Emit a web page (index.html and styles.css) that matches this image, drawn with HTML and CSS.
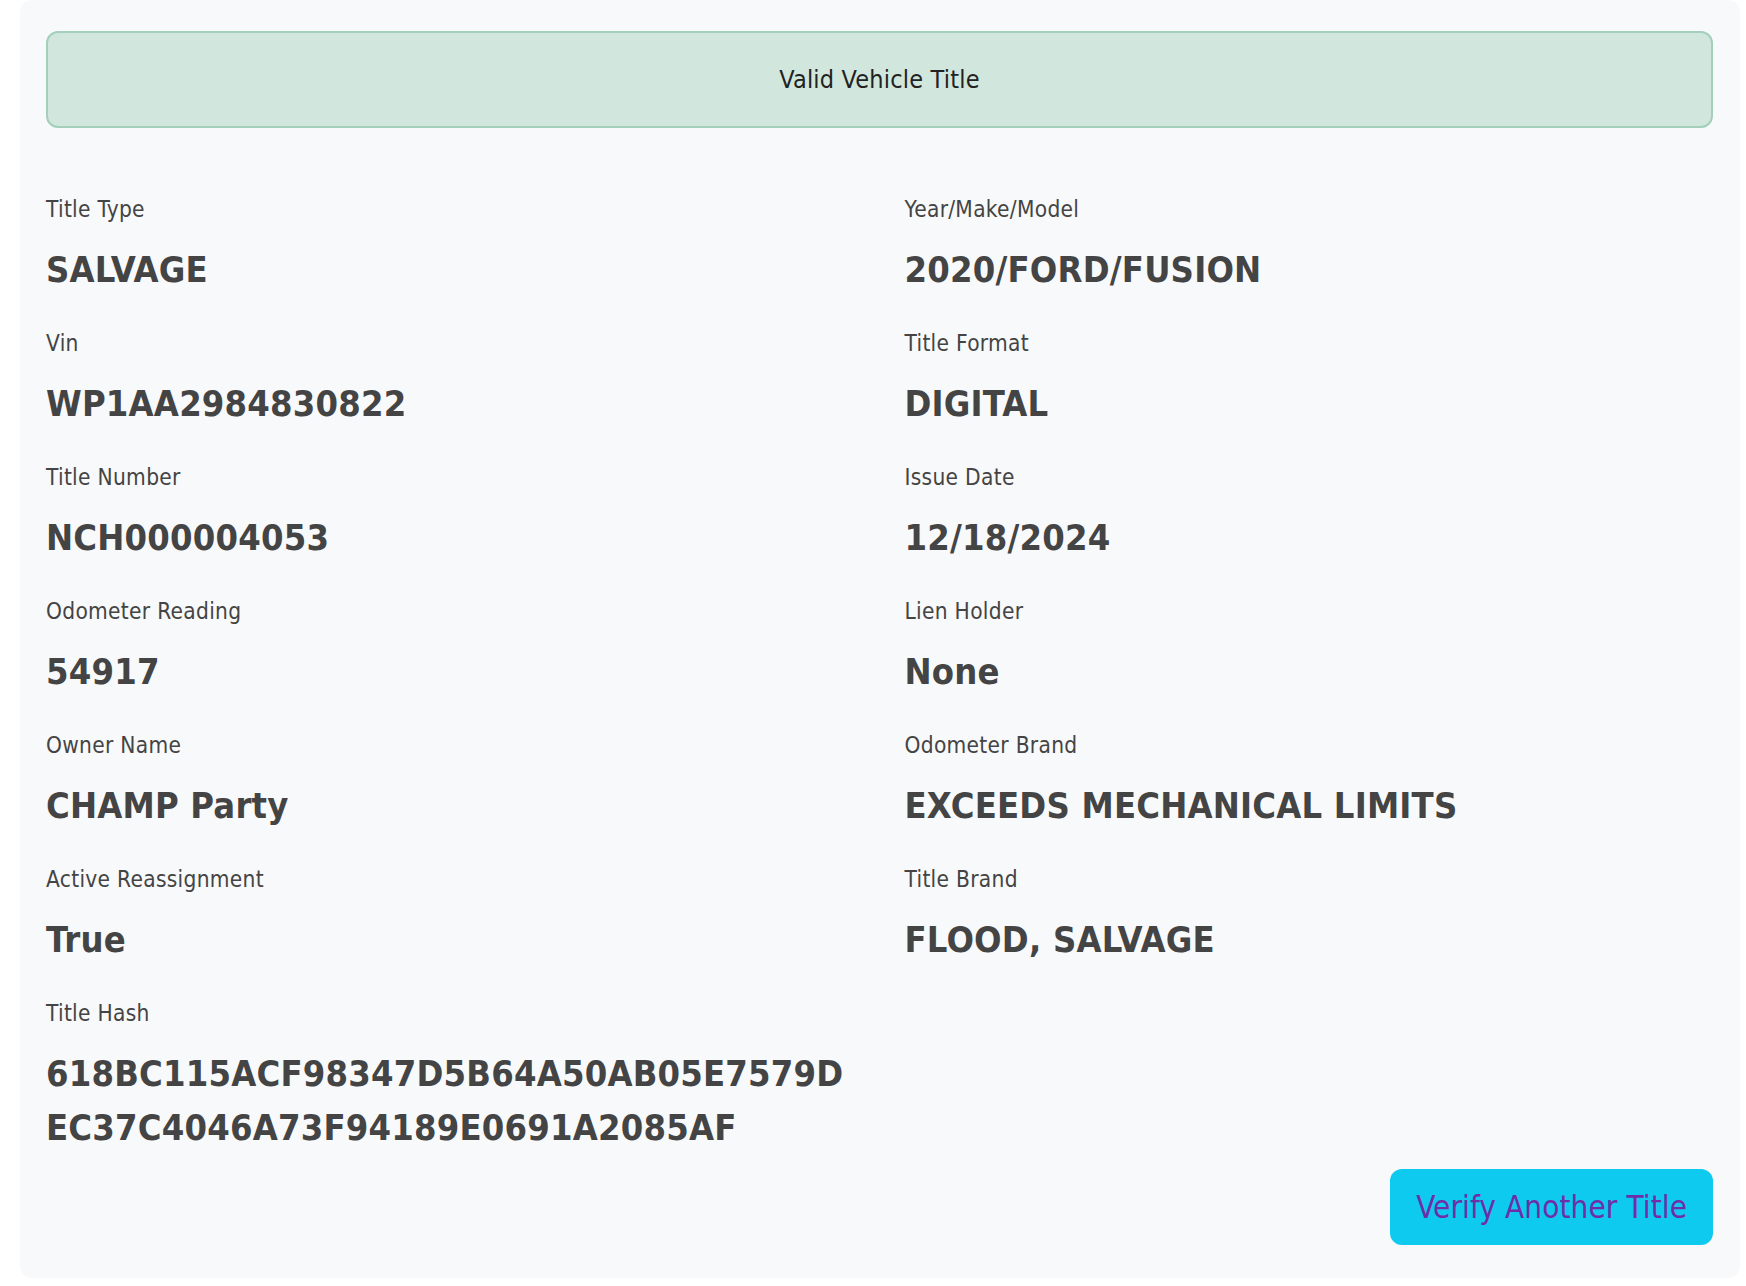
FILE: index.html
```html
<!DOCTYPE html>
<html lang="en">
<head>
    <meta charset="UTF-8">
    <meta name="viewport" content="width=device-width, initial-scale=1.0">
    <title>Title Verification Result</title>
    <link rel="stylesheet" href="styles.css">
</head>
<body>
    <div class="page">
        <div class="result-card">
            <div class="alert-valid">Valid Vehicle Title</div>

            <div class="details">
                <div class="field">
                    <div class="field-label">Title Type</div>
                    <div class="field-value">SALVAGE</div>
                </div>
                <div class="field">
                    <div class="field-label">Year/Make/Model</div>
                    <div class="field-value">2020/FORD/FUSION</div>
                </div>

                <div class="field">
                    <div class="field-label">Vin</div>
                    <div class="field-value">WP1AA2984830822</div>
                </div>
                <div class="field">
                    <div class="field-label">Title Format</div>
                    <div class="field-value">DIGITAL</div>
                </div>

                <div class="field">
                    <div class="field-label">Title Number</div>
                    <div class="field-value">NCH000004053</div>
                </div>
                <div class="field">
                    <div class="field-label">Issue Date</div>
                    <div class="field-value">12/18/2024</div>
                </div>

                <div class="field">
                    <div class="field-label">Odometer Reading</div>
                    <div class="field-value">54917</div>
                </div>
                <div class="field">
                    <div class="field-label">Lien Holder</div>
                    <div class="field-value">None</div>
                </div>

                <div class="field">
                    <div class="field-label">Owner Name</div>
                    <div class="field-value">CHAMP Party</div>
                </div>
                <div class="field">
                    <div class="field-label">Odometer Brand</div>
                    <div class="field-value">EXCEEDS MECHANICAL LIMITS</div>
                </div>

                <div class="field">
                    <div class="field-label">Active Reassignment</div>
                    <div class="field-value">True</div>
                </div>
                <div class="field">
                    <div class="field-label">Title Brand</div>
                    <div class="field-value">FLOOD, SALVAGE</div>
                </div>

                <div class="field">
                    <div class="field-label">Title Hash</div>
                    <div class="field-value hash">618BC115ACF98347D5B64A50AB05E7579DEC37C4046A73F94189E0691A2085AF</div>
                </div>
            </div>

            <div class="actions">
                <button class="btn-verify">Verify Another Title</button>
            </div>
        </div>
    </div>
</body>
</html>
```

FILE: styles.css
```css
body {
    margin: 0;
    background: #fff;
    font-family: 'DejaVu Sans Condensed', 'DejaVu Sans', sans-serif;
    color: #444;
}

.page {
    padding: 0 6px 10px 20px;
}

.result-card {
    background: #f8f9fa;
    border-radius: 12px;
    padding: 31px 27px 33px 26px;
}

.alert-valid {
    background: #d1e7dd;
    border: 2px solid #a3cfbb;
    border-radius: 12px;
    color: #222;
    font-size: 25px;
    letter-spacing: 0.2px;
    line-height: 37px;
    text-align: center;
    padding: 28px 20px;
}

.details {
    display: grid;
    grid-template-columns: 1fr 1fr;
    column-gap: 50px;
    row-gap: 30.3px;
    margin-top: 65px;
}

.field-label {
    font-size: 22.5px;
    letter-spacing: 0.3px;
    line-height: 1.5;
    margin-bottom: 16px;
}

.field-value {
    font-size: 36px;
    font-weight: bold;
    letter-spacing: 0.2px;
    line-height: 54px;
}

.field-value.hash {
    word-break: break-all;
}

.actions {
    display: flex;
    justify-content: flex-end;
    margin-top: 14px;
}

.btn-verify {
    font-family: inherit;
    font-size: 31.2px;
    letter-spacing: 0.1px;
    line-height: 48px;
    padding: 14px 26px;
    color: #6f2da8;
    background: #0fcaef;
    border: none;
    border-radius: 12px;
    cursor: pointer;
}
```
